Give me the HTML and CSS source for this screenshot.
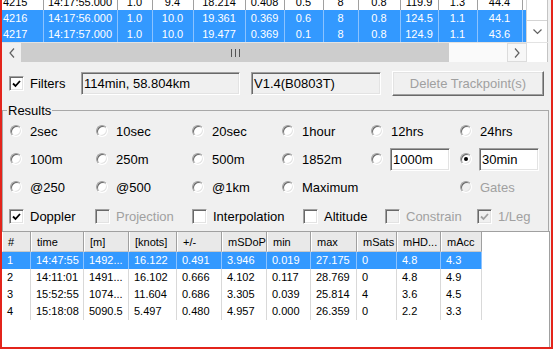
FILE: index.html
```html
<!DOCTYPE html>
<html lang="en">
<head>
  <meta charset="UTF-8">
  <title>Track results</title>
  <link rel="stylesheet" href="styles.css">
</head>
<body>
<div class="window">
  <div class="track">
    <div class="track-body">
      <div class="track-view">
        <table class="points">
          <colgroup>
            <col style="width:41px"><col style="width:74px"><col style="width:35px"><col style="width:41px">
            <col style="width:52px"><col style="width:39px"><col style="width:39px"><col style="width:35px">
            <col style="width:42px"><col style="width:38px"><col style="width:39px"><col style="width:45px">
            <col style="width:40px">
          </colgroup>
          <tr>
            <td>4215</td><td>14:17:55.000</td><td>1.0</td><td>9.4</td><td>18.214</td><td>0.408</td>
            <td>0.5</td><td>8</td><td>0.8</td><td>119.9</td><td>1.3</td><td>44.4</td><td></td>
          </tr>
          <tr class="sel">
            <td>4216</td><td>14:17:56.000</td><td>1.0</td><td>10.0</td><td>19.361</td><td>0.369</td>
            <td>0.6</td><td>8</td><td>0.8</td><td>124.5</td><td>1.1</td><td>44.1</td><td></td>
          </tr>
          <tr class="sel">
            <td>4217</td><td>14:17:57.000</td><td>1.0</td><td>10.0</td><td>19.477</td><td>0.369</td>
            <td>0.1</td><td>8</td><td>0.8</td><td>124.9</td><td>1.1</td><td>43.6</td><td></td>
          </tr>
        </table>
      </div>
      <div class="vscroll">
        <div class="vthumb"></div>
        <div class="sbtn"><svg width="9" height="6" viewBox="0 0 9 6"><polyline points="0.5,0.5 4.5,4.5 8.5,0.5" /></svg></div>
      </div>
    </div>
    <div class="hscroll">
      <div class="sbtn first"><svg width="6" height="10" viewBox="0 0 6 10"><polyline points="5,0.5 1,5 5,9.5" /></svg></div>
      <div class="hthumb"><span class="grip"></span></div>
      <div class="htrack"></div>
      <div class="sbtn boxed"><svg width="6" height="10" viewBox="0 0 6 10"><polyline points="1,0.5 5,5 1,9.5" /></svg></div>
      <div class="corner"></div>
    </div>
  </div>

  <div class="panel">
    <div class="filter-row">
      <label class="check filters"><span class="box"><svg width="11" height="11" viewBox="0 0 11 11"><polyline points="2,5.5 4.5,8 9,3" /></svg></span>Filters</label>
      <div class="field ro summary-field">114min, 58.804km</div>
      <div class="field ro version-field">V1.4(B0803T)</div>
      <button class="btn" disabled>Delete Trackpoint(s)</button>
    </div>

    <fieldset class="results">
      <legend>Results</legend>
      <div class="options">
        <label class="opt"><span class="radio"></span>2sec</label>
        <label class="opt"><span class="radio"></span>10sec</label>
        <label class="opt"><span class="radio"></span>20sec</label>
        <label class="opt"><span class="radio"></span>1hour</label>
        <label class="opt"><span class="radio"></span>12hrs</label>
        <label class="opt"><span class="radio"></span>24hrs</label>

        <label class="opt"><span class="radio"></span>100m</label>
        <label class="opt"><span class="radio"></span>250m</label>
        <label class="opt"><span class="radio"></span>500m</label>
        <label class="opt"><span class="radio"></span>1852m</label>
        <label class="opt with-field"><span class="radio"></span><span class="field edit">1000m</span></label>
        <label class="opt with-field"><span class="radio on"></span><span class="field edit">30min</span></label>

        <label class="opt"><span class="radio"></span>@250</label>
        <label class="opt"><span class="radio"></span>@500</label>
        <label class="opt"><span class="radio"></span>@1km</label>
        <label class="opt"><span class="radio"></span>Maximum</label>
        <span></span>
        <label class="opt off"><span class="radio"></span>Gates</label>
      </div>
      <div class="flags">
        <label class="check"><span class="box"><svg width="11" height="11" viewBox="0 0 11 11"><polyline points="2,5.5 4.5,8 9,3" /></svg></span>Doppler</label>
        <label class="check off"><span class="box"></span>Projection</label>
        <label class="check"><span class="box"></span>Interpolation</label>
        <label class="check"><span class="box"></span>Altitude</label>
        <label class="check off"><span class="box"></span>Constrain</label>
        <label class="check off"><span class="box"><svg width="11" height="11" viewBox="0 0 11 11"><polyline points="2,5.5 4.5,8 9,3" /></svg></span>1/Leg</label>
      </div>
    </fieldset>

    <div class="list">
      <table class="legs">
        <colgroup>
          <col style="width:29px"><col style="width:53px"><col style="width:45px"><col style="width:48px">
          <col style="width:45px"><col style="width:45px"><col style="width:44px"><col style="width:46px">
          <col style="width:40px"><col style="width:44px"><col style="width:41px">
        </colgroup>
        <tr>
          <th>#</th><th>time</th><th>[m]</th><th>[knots]</th><th>+/-</th><th>mSDoP</th>
          <th>min</th><th>max</th><th>mSats</th><th>mHD...</th><th>mAcc</th>
        </tr>
        <tr class="sel">
          <td>1</td><td>14:47:55</td><td>1492...</td><td>16.122</td><td>0.491</td><td>3.946</td>
          <td>0.019</td><td>27.175</td><td>0</td><td>4.8</td><td>4.3</td>
        </tr>
        <tr>
          <td>2</td><td>14:11:01</td><td>1491...</td><td>16.102</td><td>0.666</td><td>4.102</td>
          <td>0.117</td><td>28.769</td><td>0</td><td>4.8</td><td>4.9</td>
        </tr>
        <tr>
          <td>3</td><td>15:52:55</td><td>1074...</td><td>11.604</td><td>0.686</td><td>3.305</td>
          <td>0.039</td><td>25.814</td><td>4</td><td>3.6</td><td>4.5</td>
        </tr>
        <tr>
          <td>4</td><td>15:18:08</td><td>5090.5</td><td>5.497</td><td>0.480</td><td>4.957</td>
          <td>0.000</td><td>26.359</td><td>0</td><td>2.2</td><td>3.3</td>
        </tr>
      </table>
    </div>
  </div>
</div>
</body>
</html>
```

FILE: styles.css
```css
body { margin: 0; background: #fff; }

.window { width: 549px; height: 347px; border: 2px solid #e3241b; border-top: 0; background: #f0f0f0; display: flex; flex-direction: column; overflow: hidden; font-family: "Liberation Sans", Arial, sans-serif; font-size: 13px; color: #000; }

/* trackpoint grid */
.track { width: 546px; }
.track-body { display: flex; height: 42px; }
.track-view { width: 526px; overflow: hidden; background: #fff; }
.points { border-collapse: collapse; table-layout: fixed; width: 560px; margin-top: -6px; font-size: 11px; }
.points td { height: 16px; padding: 0; line-height: 16px; border-right: 1px solid #a0a0a0; text-align: center; white-space: nowrap; overflow: hidden; }
.points td:first-child { text-align: left; padding-left: 1px; }
.points .sel td { background: #3399ff; color: #fff; border-right-color: #8cc3ff; }

.vscroll { width: 20px; display: flex; flex-direction: column; background: #fff; border-left: 1px solid #d4d4d4; border-right: 1px solid #c4c4c4; }
.vthumb { height: 20px; border-bottom: 1px solid #d4d4d4; }
.sbtn { flex: 1; display: flex; align-items: center; justify-content: center; background: #f0f0f0; }
.sbtn svg polyline { fill: none; stroke: #606060; stroke-width: 1.2; }
.vscroll .sbtn { background: #fff; }

.hscroll { height: 20px; display: flex; background: #fafafa; border-top: 1px solid #e3e3e3; box-sizing: border-box; }
.hscroll .first { flex: none; width: 19px; }
.hthumb { width: 429px; background: #cdcdcd; display: flex; align-items: center; justify-content: center; }
.grip { width: 7px; height: 8px; border-left: 1px solid #555; border-right: 1px solid #555; position: relative; }
.grip::after { content: ""; position: absolute; left: 3px; top: 0; width: 1px; height: 8px; background: #555; }
.htrack { width: 58px; }
.hscroll .boxed { flex: none; width: 20px; border: 1px solid #dcdcdc; box-sizing: border-box; background: #f7f7f7; }
.corner { width: 20px; background: #fff; border-right: 1px solid #c4c4c4; }

/* controls */
.panel { flex: 1; display: flex; flex-direction: column; }
.filter-row { display: flex; align-items: center; height: 25px; margin-top: 9px; padding-left: 7px; }

.check { display: flex; align-items: center; gap: 6px; white-space: nowrap; }
.check.filters { width: 72px; }
.box { width: 15px; height: 15px; box-sizing: border-box; flex: none; background: #fff; border: 1px solid; border-color: #a0a0a0 #fff #fff #a0a0a0; box-shadow: inset 1px 1px 0 #696969, inset -1px -1px 0 #e3e3e3; display: flex; align-items: center; justify-content: center; }
.box svg polyline { fill: none; stroke: #000; stroke-width: 1.8; }
.check.off { color: #a0a0a0; }
.check.off .box { background: #f0f0f0; }
.check.off .box svg polyline { stroke: #a0a0a0; }

.field { height: 23px; box-sizing: border-box; padding-left: 2px; line-height: 21px; white-space: nowrap; border: 1px solid; border-color: #a0a0a0 #fff #fff #a0a0a0; box-shadow: inset 1px 1px 0 #696969, inset -1px -1px 0 #e3e3e3; }
.field.ro { background: #f0f0f0; }
.field.edit { background: #fff; width: 60px; display: block; }
.summary-field { width: 159px; margin-right: 11px; }
.version-field { width: 130px; margin-right: 11px; }

.btn { width: 152px; height: 25px; background: #f0f0f0; color: #a0a0a0; font: inherit; border: 1px solid; border-color: #fff #696969 #696969 #fff; box-shadow: inset -1px -1px 0 #a0a0a0, inset 1px 1px 0 #e3e3e3; padding: 0; }

.results { margin: 7px 0 0; padding: 0 0 1px; width: 545px; border: 1px solid #a8a8a8; border-bottom: 0; min-width: 0; }
.results legend { margin-left: 4px; padding: 0 1px; line-height: 15px; }

.options { display: grid; grid-template-columns: 86px 96px 90px 89px 89px 1fr; grid-auto-rows: 28px; padding-left: 7px; margin-top: -1px; }
.opt { display: flex; align-items: center; gap: 8px; white-space: nowrap; }
.opt.with-field { gap: 7px; }
.opt.off { color: #a0a0a0; }
.radio { width: 12px; height: 12px; box-sizing: border-box; flex: none; border-radius: 50%; background: #fff; border: 1px solid; border-color: #a0a0a0 #fff #fff #a0a0a0; box-shadow: inset 1px 1px 0 #696969, inset -1px -1px 0 #e3e3e3; position: relative; }
.opt.off .radio { background: #f0f0f0; }
.radio.on::after { content: ""; position: absolute; left: 3px; top: 3px; width: 4px; height: 4px; border-radius: 50%; background: #000; }

.flags { display: grid; grid-template-columns: 86px 97px 111px 82px 92px 1fr; height: 28px; padding-left: 6px; margin-top: 1px; }

/* results list */
.list { flex: 1; width: 547px; background: #fff; border-top: 1px solid #a0a0a0; border-right: 1px solid #a0a0a0; }
.legs { border-collapse: separate; border-spacing: 0; table-layout: fixed; width: 480px; font-size: 11px; }
.legs th { height: 20px; box-sizing: border-box; padding: 0 0 0 5px; text-align: left; font-weight: normal; background: #e9e9e9; border-left: 1px solid #fff; border-right: 1px solid #a0a0a0; border-bottom: 1px solid #c8c8c8; white-space: nowrap; }
.legs td { height: 17px; padding: 0 0 0 5px; line-height: 17px; border-right: 1px solid #d9d9d9; white-space: nowrap; overflow: hidden; }
.legs .sel td { background: #3399ff; color: #fff; border-right-color: #8cc3ff; }
```
